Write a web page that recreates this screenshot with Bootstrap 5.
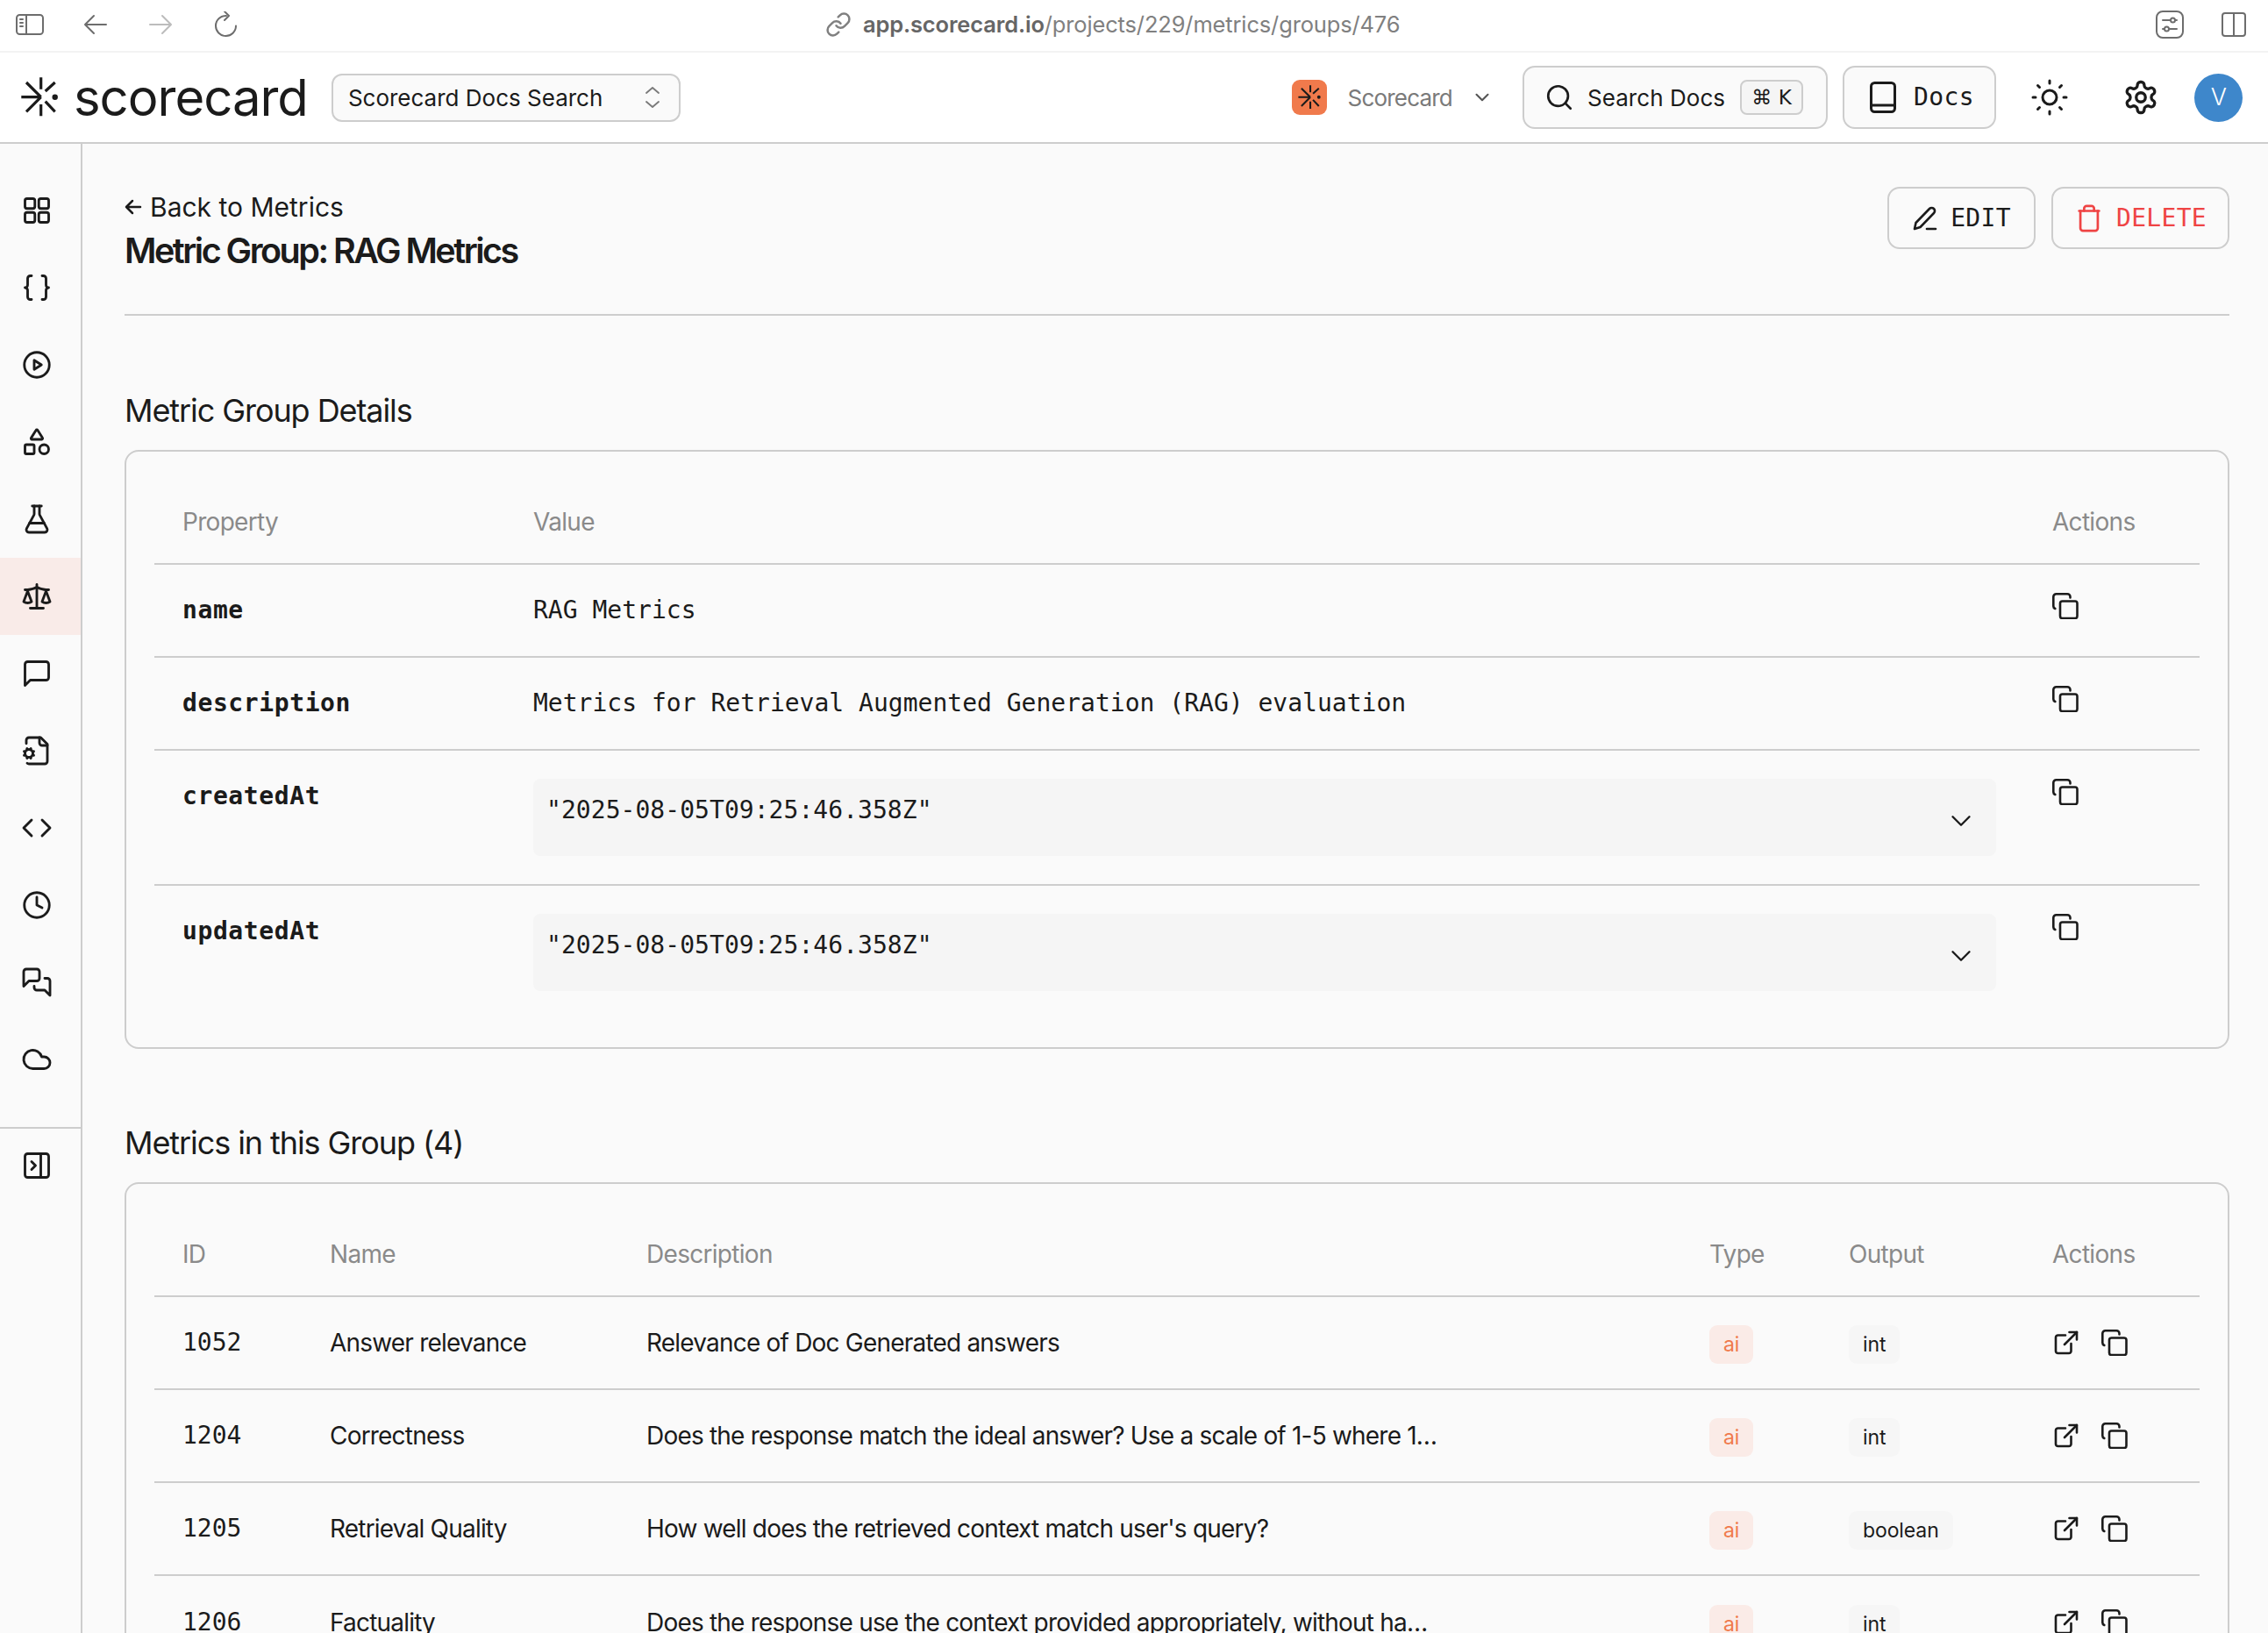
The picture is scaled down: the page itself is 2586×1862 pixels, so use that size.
<!DOCTYPE html>
<html lang="en">
<head>
<meta charset="utf-8">
<title>Metric Group: RAG Metrics</title>
<link href="https://cdn.jsdelivr.net/npm/bootstrap@5.3.0/dist/css/bootstrap.min.css" rel="stylesheet">
<style>
:root{--ink:#1b1b1b;--line:#cdcdcd;--mute:#8a8a8a;--page:#fafafa;--mono:"DejaVu Sans Mono","Liberation Mono",monospace;--sans:Inter,"Noto Sans",sans-serif}
html,body{height:100%}
body{font-family:var(--sans);color:var(--ink);background:var(--page);font-size:28px;letter-spacing:-.8px}
.ico{fill:none;stroke:currentColor;stroke-width:1.9;stroke-linecap:round;stroke-linejoin:round;flex:none;display:block}
.ico-px{stroke-width:2.6}
.chrome{height:60px;flex:none;background:#fff;border-bottom:2px solid #f3f3f3;padding:0 25px 2px 18px;color:#6d6d6d}
.chrome .ico{stroke-width:2}
.urlbit{margin-left:669px;gap:13px;font-size:25.5px;color:#808080;letter-spacing:-.15px}
.urlbit b{color:#666;font-weight:600}
.topnav{height:104px;background:#fff;border-bottom:2px solid var(--line);padding:0 29px 0 24px;flex:none;flex-wrap:nowrap}
.wordmark{font-size:58px;letter-spacing:-1px;color:var(--ink);margin:0 0 0 18px;line-height:1;font-weight:400;padding:0}
.proj-select{width:398px;height:55px;margin-left:27px;border:2px solid var(--line);border-radius:12px;background:#fafafa;padding:0 21px 0 17px;font-size:26px;letter-spacing:0}
.org-logo{width:40px;height:40px;border-radius:9px;background:#f07a4c;color:#1b1b1b}
.org-name{font-size:26px;color:#7a7a7a;letter-spacing:-.8px;margin-left:24px}
.tool-btn{height:72px;border:2px solid var(--line);border-radius:14px;background:#fafafa;color:var(--ink);font-size:26px;letter-spacing:.05px;padding:0 26px;white-space:nowrap;--bs-btn-hover-bg:#fafafa;--bs-btn-hover-border-color:var(--line)}
.kbd-chip{height:40px;width:72px;border:2px solid var(--line);border-radius:8px;background:#f5f5f5;font-size:23px;letter-spacing:0;font-family:"DejaVu Sans",sans-serif;margin-left:17px}
.mono-label{font-family:var(--mono);letter-spacing:.4px;font-size:28px}
.avatar-dot{width:55px;height:55px;border-radius:50%;background:#3e87cb;color:#fff;font-size:27px;font-weight:300}
.rail{width:94px;flex:none;border-right:2px solid var(--line);background:var(--page)}
.rail-list{padding:32px 0 33px}
.rail-link{height:88px;color:var(--ink);padding:0 8px 0 0}
.rail-link.here{background:#f9ebe8}
.rail-foot{border-top:2px solid var(--line);height:86px;padding-right:8px}
.pane{min-width:0;padding:47px 44px 0 48px}
.pane-head{border-bottom:2px solid var(--line);height:149px}
.back-link{color:var(--ink);text-decoration:none;font-size:30px;line-height:40px;margin-top:5px;letter-spacing:0}
.page-title{font-size:39.5px;line-height:48px;margin:6px 0 0;font-weight:600;letter-spacing:-2.5px}
.head-acts{gap:18px;margin-top:2px}
.act-btn{height:71px;border:2px solid var(--line);border-radius:14px;background:#fafafa;font-family:var(--mono);font-size:28px;letter-spacing:.3px;padding:0;color:var(--ink)}
.act-edit{width:169px}.act-del{width:203px;color:#ef4444}
.sect-title{font-size:36px;line-height:44px;font-weight:400;margin:0 0 23px;letter-spacing:-1.08px}
.sect-one{margin-top:86px}.sect-two{margin-top:85px}
.grid-card{border:2px solid var(--line);border-radius:16px;background:var(--page);padding:32px;--bs-card-bg:var(--page)}
.table.data-tbl{--bs-table-bg:transparent;--bs-table-color:var(--ink);table-layout:fixed;border-collapse:separate;border-spacing:0;margin:0;width:2332px}
.table.data-tbl>thead>tr>th{padding:0 32px;height:97px;line-height:32px;vertical-align:middle;font-weight:400;color:var(--mute);font-size:28px;letter-spacing:-.7px;border-bottom:2px solid var(--line);box-shadow:none}
.table.data-tbl>tbody>tr>td{padding:32px;line-height:40px;font-size:28px;border-bottom:2px solid var(--line);box-shadow:none}
.table.data-tbl>tbody>tr:last-child>td{border-bottom:0}
.props td{vertical-align:top}
.metrics td{vertical-align:middle;height:106px;padding-top:0!important;padding-bottom:0!important}
.mono-cell{font-family:var(--mono);letter-spacing:.01px}
.prop-key{font-weight:700;letter-spacing:.6px}
.code-box{background:#f5f5f5;border-radius:8px;height:88px;padding:16px 16px 16px 15px;font-family:var(--mono);letter-spacing:.05px}
.code-box .ico{margin:13px 5px 0 auto;stroke-width:1.5}
.chip{font-weight:400;font-size:23px;line-height:44px;height:44px;padding:0 16px;border-radius:9px;letter-spacing:-.1px;background:#f6f6f6;color:var(--ink);display:inline-block;vertical-align:middle;margin-top:4px}
.chip-ai{background:#faebe7;color:#f07a4c}
.clip{overflow:hidden;white-space:nowrap}
.row-acts{gap:26px;padding-left:2px}
</style>
</head>
<body class="d-flex flex-column overflow-hidden">
<svg width="0" height="0" class="position-absolute">
<symbol id="i-copy" viewBox="0 0 30 30"><rect x="9" y="9.5" width="19.5" height="19.5" rx="2.5"/><path d="M20.5 5.5V4.5a3.2 3.2 0 0 0-3.2-3.2H4.5a3.2 3.2 0 0 0-3.2 3.2V15a3.2 3.2 0 0 0 2 3"/></symbol>
<symbol id="i-ext" viewBox="0 0 28 28"><path d="M13 5.5H4.5A2.5 2.5 0 0 0 2 8v15.5A2.500 2.500 0 0 0 4.500 26H17a2.500 2.500 0 0 0 2.500-2.500V15"/><path d="M12 16 26 2"/><path d="M17.500 2H26v8.500"/></symbol>
<symbol id="i-down" viewBox="0 0 24 24"><path d="m6 9 6 6 6-6"/></symbol>
<symbol id="i-spark" viewBox="9 9 42 46"><path d="M31.700 9.300v13.400M31.700 40v13.300M9.300 31.700h22.400M15 15l16.700 16.700M15 48.300l16.700-16.600M36.700 25l11-10M36.700 36.700l11 11.600" stroke-linecap="butt"/><circle cx="47.700" cy="31.700" r="3.200" fill="currentColor" stroke="none"/></symbol>
</svg>

<div class="chrome d-flex align-items-center">
  <div class="d-flex align-items-center">
    <svg class="ico" width="32" height="24" viewBox="0 0 32 24"><rect x="1" y="1" width="30" height="22" rx="3.500"/><path d="M12 1v22" /><path d="M5 6h3M5 10h3M5 14h3" /></svg>
    <svg class="ico" style="margin-left:45px" width="28" height="24" viewBox="0 0 28 24"><path d="M26 12H3M12 2 2 12l10 10"/></svg>
    <svg class="ico" style="margin-left:46px;color:#bcbcbc" width="28" height="24" viewBox="0 0 28 24"><path d="M2 12h23M16 2l10 10-10 10"/></svg>
    <svg class="ico" style="margin-left:47px" width="28" height="30" viewBox="0 0 28 30"><path d="M14 5a11.500 11.500 0 1 0 11 11.500"/><path d="M12 0l5 5-5 5"/></svg>
  </div>
  <div class="urlbit d-flex align-items-center">
    <svg class="ico" width="30" height="30" viewBox="0 0 24 24"><path d="M10 13a5 5 0 0 0 7.540.54l3-3a5 5 0 0 0-7.070-7.070l-1.720 1.710"/><path d="M14 11a5 5 0 0 0-7.540-.54l-3 3a5 5 0 0 0 7.070 7.070l1.710-1.710"/></svg>
    <span><b>app.scorecard.io</b>/projects/229/metrics/groups/476</span>
  </div>
  <div class="ms-auto d-flex align-items-center">
    <svg class="ico" width="32" height="32" viewBox="0 0 32 32"><rect x="1" y="1" width="30" height="30" rx="7"/><circle cx="19.500" cy="11" r="2.500"/><circle cx="12.500" cy="21" r="2.500"/><path d="M8 11h9M22 11h2M8 21h2M15 21h9"/></svg>
    <svg class="ico" style="margin-left:43px" width="28" height="28" viewBox="0 0 28 28"><rect x="1" y="1" width="26" height="26" rx="3"/><path d="M14 1v26"/></svg>
  </div>
</div>

<nav class="navbar topnav align-items-center justify-content-start">
  <svg class="ico" width="42" height="46" style="stroke-width:3.200"><use href="#i-spark"/></svg>
  <a class="navbar-brand wordmark" href="#">scorecard</a>
  <div class="proj-select d-flex align-items-center justify-content-between">
    <span>Scorecard Docs Search</span>
    <svg class="ico" width="18" height="26" viewBox="0 0 18 26" style="color:#7a7a7a"><path d="M2 8l7-6 7 6M2 18l7 6 7-6"/></svg>
  </div>
  <div class="ms-auto d-flex align-items-center">
    <span class="org-logo d-flex align-items-center justify-content-center"><svg class="ico" width="26" height="28" style="stroke-width:3.400"><use href="#i-spark"/></svg></span>
    <span class="org-name">Scorecard</span>
    <svg class="ico" style="margin-left:21px;color:#555" width="26" height="26" viewBox="0 0 24 24"><path d="m6 9 6 6 6-6"/></svg>
    <button type="button" class="btn tool-btn d-flex align-items-center" style="margin-left:33px;width:348px">
      <svg class="ico" width="34" height="34" viewBox="0 0 24 24" style="margin-right:15px;margin-left:-3px"><circle cx="11" cy="11" r="8"/><path d="m21 21-4.300-4.300"/></svg>
      Search Docs
      <span class="kbd-chip d-flex align-items-center justify-content-center">⌘ K</span>
    </button>
    <button type="button" class="btn tool-btn d-flex align-items-center mono-label" style="margin-left:17px;width:175px">
      <svg class="ico" width="30" height="36" viewBox="0 0 30 36" style="margin-right:20px;margin-left:3px;stroke-width:3"><rect x="1.500" y="1.500" width="27" height="33" rx="4"/><path d="M1.500 27h27"/></svg>
      Docs
    </button>
    <svg class="ico" style="margin-left:40px;stroke-width:3" width="42" height="42" viewBox="0 0 42 42"><circle cx="21" cy="21" r="8"/><path d="M21 2v3M21 37v3M2 21h3M37 21h3M7.500 7.500l2 2M32.500 32.500l2 2M7.500 34.500l2-2M32.500 9.500l2-2"/></svg>
    <svg class="ico" style="margin-left:62px" width="42" height="42" viewBox="0 0 24 24"><path d="M12.220 2h-.44a2 2 0 0 0-2 2v.18a2 2 0 0 1-1 1.730l-.43.25a2 2 0 0 1-2 0l-.15-.08a2 2 0 0 0-2.730.73l-.22.38a2 2 0 0 0 .73 2.730l.15.1a2 2 0 0 1 1 1.720v.51a2 2 0 0 1-1 1.740l-.15.09a2 2 0 0 0-.73 2.730l.22.38a2 2 0 0 0 2.730.73l.15-.08a2 2 0 0 1 2 0l.43.25a2 2 0 0 1 1 1.730V20a2 2 0 0 0 2 2h.44a2 2 0 0 0 2-2v-.18a2 2 0 0 1 1-1.730l.43-.25a2 2 0 0 1 2 0l.15.08a2 2 0 0 0 2.730-.73l.22-.39a2 2 0 0 0-.73-2.730l-.15-.08a2 2 0 0 1-1-1.740v-.5a2 2 0 0 1 1-1.740l.15-.09a2 2 0 0 0 .73-2.730l-.22-.38a2 2 0 0 0-2.730-.73l-.15.08a2 2 0 0 1-2 0l-.43-.25a2 2 0 0 1-1-1.730V4a2 2 0 0 0-2-2z"/><circle cx="12" cy="12" r="3"/></svg>
    <span class="avatar-dot d-flex align-items-center justify-content-center" style="margin-left:40px">V</span>
  </div>
</nav>

<div class="d-flex flex-grow-1 overflow-hidden">
  <aside class="rail d-flex flex-column">
    <div class="rail-list nav flex-column flex-nowrap">
      <a class="rail-link nav-link d-flex align-items-center justify-content-center" href="#"><svg class="ico" width="36" height="36" viewBox="0 0 24 24"><rect x="3" y="3" width="7.500" height="7.500" rx="1.500"/><rect x="13.500" y="3" width="7.500" height="7.500" rx="1.500"/><rect x="3" y="13.500" width="7.500" height="7.500" rx="1.500"/><rect x="13.500" y="13.500" width="7.500" height="7.500" rx="1.500"/></svg></a>
      <a class="rail-link nav-link d-flex align-items-center justify-content-center" href="#"><svg class="ico" width="36" height="36" viewBox="0 0 24 24"><path d="M8 3H7a2 2 0 0 0-2 2v5a2 2 0 0 1-2 2 2 2 0 0 1 2 2v5c0 1.100.9 2 2 2h1"/><path d="M16 21h1a2 2 0 0 0 2-2v-5c0-1.100.9-2 2-2a2 2 0 0 1-2-2V5a2 2 0 0 0-2-2h-1"/></svg></a>
      <a class="rail-link nav-link d-flex align-items-center justify-content-center" href="#"><svg class="ico" width="36" height="36" viewBox="0 0 24 24"><circle cx="12" cy="12" r="9.500"/><path d="M10 8.500v7l5.500-3.500z"/></svg></a>
      <a class="rail-link nav-link d-flex align-items-center justify-content-center" href="#"><svg class="ico" width="36" height="36" viewBox="0 0 24 24"><path d="M8.300 10a.7.7 0 0 1-.626-1.079L11.400 3a.7.7 0 0 1 1.198-.043L16.300 8.900a.7.7 0 0 1-.572 1.100Z"/><rect x="3" y="14" width="7" height="7" rx="1"/><circle cx="17.500" cy="17.500" r="3.500"/></svg></a>
      <a class="rail-link nav-link d-flex align-items-center justify-content-center" href="#"><svg class="ico" width="36" height="36" viewBox="0 0 24 24"><path d="M14 2v6a2 2 0 0 0 .245.96l5.510 10.080A2 2 0 0 1 18 22H6a2 2 0 0 1-1.755-2.960l5.510-10.080A2 2 0 0 0 10 8V2"/><path d="M6.453 15h11.094"/><path d="M8.500 2h7"/></svg></a>
      <a class="rail-link here nav-link d-flex align-items-center justify-content-center" href="#"><svg class="ico" width="36" height="36" viewBox="0 0 24 24"><path d="m16 16 3-8 3 8c-.87.65-1.920 1-3 1s-2.130-.35-3-1Z"/><path d="m2 16 3-8 3 8c-.87.65-1.920 1-3 1s-2.130-.35-3-1Z"/><path d="M7 21h10"/><path d="M12 3v18"/><path d="M3 7h2c2 0 5-1 7-2 2 1 5 2 7 2h2"/></svg></a>
      <a class="rail-link nav-link d-flex align-items-center justify-content-center" href="#"><svg class="ico" width="36" height="36" viewBox="0 0 24 24"><path d="M21 15a2 2 0 0 1-2 2H7l-4 4V5a2 2 0 0 1 2-2h14a2 2 0 0 1 2 2z"/></svg></a>
      <a class="rail-link nav-link d-flex align-items-center justify-content-center" href="#"><svg class="ico" width="36" height="36" viewBox="0 0 24 24"><path d="M14 2v4a2 2 0 0 0 2 2h4"/><path d="M4.677 21.500a2 2 0 0 0 1.313.5H18a2 2 0 0 0 2-2V7l-5-5H6a2 2 0 0 0-2 2v2.500"/><circle cx="6" cy="14" r="3"/><path d="m3.200 12.900-.9-.4M3.200 15.100l-.9.4M4.900 11.200l-.4-.9M4.900 16.800l-.4.9M7.500 10.300l-.4.9M7.500 17.700l-.4-.9M9.700 12.500l-.9.4M9.700 15.500l-.9-.4"/></svg></a>
      <a class="rail-link nav-link d-flex align-items-center justify-content-center" href="#"><svg class="ico" width="36" height="36" viewBox="0 0 24 24"><path d="m16 18 6-6-6-6"/><path d="m8 6-6 6 6 6"/></svg></a>
      <a class="rail-link nav-link d-flex align-items-center justify-content-center" href="#"><svg class="ico" width="36" height="36" viewBox="0 0 24 24"><circle cx="12" cy="12" r="9.500"/><path d="M12 6v6l4 2"/></svg></a>
      <a class="rail-link nav-link d-flex align-items-center justify-content-center" href="#"><svg class="ico" width="36" height="36" viewBox="0 0 24 24"><path d="M14 9a2 2 0 0 1-2 2H6l-4 4V4a2 2 0 0 1 2-2h8a2 2 0 0 1 2 2z"/><path d="M18 9h2a2 2 0 0 1 2 2v11l-4-4h-6a2 2 0 0 1-2-2v-1"/></svg></a>
      <a class="rail-link nav-link d-flex align-items-center justify-content-center" href="#"><svg class="ico" width="36" height="36" viewBox="0 0 24 24"><path d="M17.500 19H9a7 7 0 1 1 6.710-9h1.790a4.500 4.500 0 1 1 0 9Z"/></svg></a>
    </div>
    <div class="rail-foot d-flex align-items-center justify-content-center"><svg class="ico" width="36" height="36" viewBox="0 0 24 24"><rect x="3" y="3" width="18" height="18" rx="2"/><path d="M15 3v18"/><path d="m8 9 3 3-3 3"/></svg></div>
  </aside>

  <main class="pane flex-grow-1 overflow-hidden">
    <header class="pane-head d-flex justify-content-between align-items-start">
      <div>
        <a class="back-link d-flex align-items-center" href="#"><svg class="ico" width="20" height="20" viewBox="0 0 20 20" style="margin-right:9px;stroke-width:2.500"><path d="M18 10H2M9 3l-7 7 7 7"/></svg>Back to Metrics</a>
        <h1 class="page-title">Metric Group: RAG Metrics</h1>
      </div>
      <div class="head-acts d-flex">
        <button type="button" class="btn act-btn act-edit d-flex align-items-center justify-content-center" style="gap:14px"><svg class="ico ico-px" width="30" height="30" viewBox="0 0 30 30"><path d="M3 27l1.500-7L20 4a3.500 3.500 0 0 1 5 5L9.500 25z"/><path d="M17 27h10"/></svg>EDIT</button>
        <button type="button" class="btn act-btn act-del d-flex align-items-center justify-content-center" style="gap:14px"><svg class="ico" width="34" height="34" viewBox="0 0 24 24"><path d="M4 6h16"/><path d="M19 6v14c0 1-1 2-2 2H7c-1 0-2-1-2-2V6"/><path d="M8 6V4c0-1 1-2 2-2h4c1 0 2 1 2 2v2"/></svg>DELETE</button>
      </div>
    </header>

    <h2 class="sect-title sect-one">Metric Group Details</h2>
    <div class="card grid-card">
      <table class="table data-tbl props">
        <colgroup><col style="width:400px"><col style="width:1732px"><col style="width:200px"></colgroup>
        <thead><tr><th>Property</th><th>Value</th><th>Actions</th></tr></thead>
        <tbody>
          <tr><td class="mono-cell prop-key">name</td><td class="mono-cell">RAG Metrics</td><td><svg class="ico ico-px" width="30" height="30"><use href="#i-copy"/></svg></td></tr>
          <tr><td class="mono-cell prop-key">description</td><td class="mono-cell">Metrics for Retrieval Augmented Generation (RAG) evaluation</td><td><svg class="ico ico-px" width="30" height="30"><use href="#i-copy"/></svg></td></tr>
          <tr><td class="mono-cell prop-key">createdAt</td><td><div class="code-box d-flex"><span>"2025-08-05T09:25:46.358Z"</span><svg class="ico" width="38" height="38"><use href="#i-down"/></svg></div></td><td><svg class="ico ico-px" width="30" height="30"><use href="#i-copy"/></svg></td></tr>
          <tr><td class="mono-cell prop-key">updatedAt</td><td><div class="code-box d-flex"><span>"2025-08-05T09:25:46.358Z"</span><svg class="ico" width="38" height="38"><use href="#i-down"/></svg></div></td><td><svg class="ico ico-px" width="30" height="30"><use href="#i-copy"/></svg></td></tr>
        </tbody>
      </table>
    </div>

    <h2 class="sect-title sect-two">Metrics in this Group (4)</h2>
    <div class="card grid-card">
      <table class="table data-tbl metrics">
        <colgroup><col style="width:168px"><col style="width:361px"><col style="width:1212px"><col style="width:159px"><col style="width:232px"><col style="width:200px"></colgroup>
        <thead><tr><th>ID</th><th>Name</th><th>Description</th><th>Type</th><th>Output</th><th>Actions</th></tr></thead>
        <tbody>
          <tr><td class="mono-cell">1052</td><td>Answer relevance</td><td class="clip">Relevance of Doc Generated answers</td><td><span class="chip chip-ai">ai</span></td><td><span class="chip">int</span></td><td><div class="row-acts d-flex align-items-center"><svg class="ico ico-px" width="28" height="28"><use href="#i-ext"/></svg><svg class="ico ico-px" width="30" height="30"><use href="#i-copy"/></svg></div></td></tr>
          <tr><td class="mono-cell">1204</td><td>Correctness</td><td class="clip">Does the response match the ideal answer? Use a scale of 1-5 where 1…</td><td><span class="chip chip-ai">ai</span></td><td><span class="chip">int</span></td><td><div class="row-acts d-flex align-items-center"><svg class="ico ico-px" width="28" height="28"><use href="#i-ext"/></svg><svg class="ico ico-px" width="30" height="30"><use href="#i-copy"/></svg></div></td></tr>
          <tr><td class="mono-cell">1205</td><td>Retrieval Quality</td><td class="clip">How well does the retrieved context match user's query?</td><td><span class="chip chip-ai">ai</span></td><td><span class="chip">boolean</span></td><td><div class="row-acts d-flex align-items-center"><svg class="ico ico-px" width="28" height="28"><use href="#i-ext"/></svg><svg class="ico ico-px" width="30" height="30"><use href="#i-copy"/></svg></div></td></tr>
          <tr><td class="mono-cell">1206</td><td>Factuality</td><td class="clip">Does the response use the context provided appropriately, without ha…</td><td><span class="chip chip-ai">ai</span></td><td><span class="chip">int</span></td><td><div class="row-acts d-flex align-items-center"><svg class="ico ico-px" width="28" height="28"><use href="#i-ext"/></svg><svg class="ico ico-px" width="30" height="30"><use href="#i-copy"/></svg></div></td></tr>
        </tbody>
      </table>
    </div>
  </main>
</div>
<script src="https://cdn.jsdelivr.net/npm/bootstrap@5.3.0/dist/js/bootstrap.bundle.min.js"></script>
</body>
</html>
